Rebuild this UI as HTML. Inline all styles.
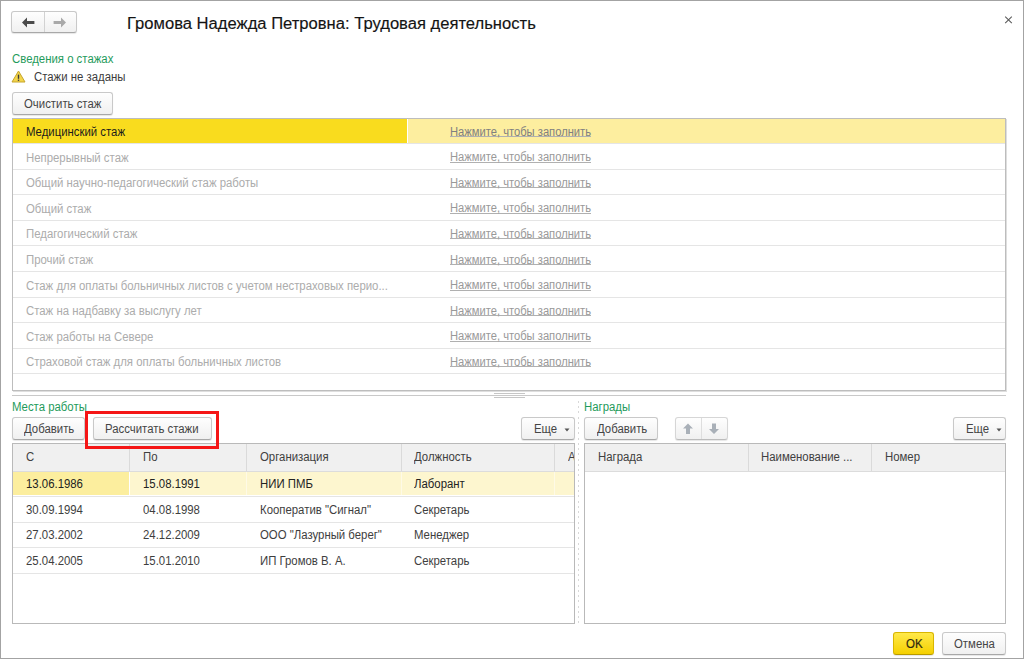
<!DOCTYPE html>
<html><head><meta charset="utf-8"><style>
*{margin:0;padding:0;box-sizing:border-box}
html,body{width:1024px;height:659px;overflow:hidden;background:#fff}
body{font-family:"Liberation Sans",sans-serif;position:relative}
.a{position:absolute}
.t{position:absolute;white-space:nowrap;line-height:14px;transform-origin:0 0}
.btn{position:absolute;border:1px solid #c9c9c9;border-bottom-color:#a8a8a8;border-radius:3px;background:linear-gradient(#fefefe,#f0f0f0);box-shadow:0 1px 1px rgba(0,0,0,0.10)}
.ln{position:absolute;height:1px}
</style></head><body>
<div class="a" style="left:0;top:0;width:1024px;height:659px;border:1px solid #a3a3a3"></div>
<div class="btn" style="left:11px;top:11px;width:66px;height:22px"></div>
<div class="a" style="left:44px;top:12px;width:1px;height:20px;background:#d2d2d2"></div>
<svg class="a" style="left:19px;top:15px" width="18" height="15" viewBox="0 0 18 15"><path d="M3 7.5 L8 2.5 L8 6 L15.4 6 L15.4 9 L8 9 L8 12.5 Z" fill="#4b4b4b"/></svg>
<svg class="a" style="left:51px;top:15px" width="18" height="15" viewBox="0 0 18 15"><path d="M15 7.5 L10 2.5 L10 6 L2.6 6 L2.6 9 L10 9 L10 12.5 Z" fill="#a9a9a9"/></svg>
<div class="t" style="left:127px;top:15.5px;color:#141414;font-size:17.3px;transform:scaleX(0.96);-webkit-text-stroke:0.15px #141414">Громова Надежда Петровна: Трудовая деятельность</div>
<svg class="a" style="left:1003px;top:14px" width="11" height="11" viewBox="0 0 11 11"><path d="M2.2 2.6 L8.8 9.2 M8.8 2.6 L2.2 9.2" stroke="#5a5a5a" stroke-width="1.05"/></svg>
<div class="t" style="left:12px;top:52px;color:#1f9b5c;font-size:12.5px;transform:scaleX(0.91);">Сведения о стажах</div>
<svg class="a" style="left:11px;top:70px" width="15" height="13" viewBox="0 0 15 13"><path d="M7.5 1 L14 12 L1 12 Z" fill="#f3d54a" stroke="#c6a52c" stroke-width="1" stroke-linejoin="round"/><rect x="6.8" y="4.6" width="1.4" height="4.2" fill="#3a3a3a"/><rect x="6.8" y="9.6" width="1.4" height="1.3" fill="#3a3a3a"/></svg>
<div class="t" style="left:34px;top:70px;color:#3c3c3c;font-size:12.5px;transform:scaleX(0.91);">Стажи не заданы</div>
<div class="btn" style="left:12px;top:92px;width:101px;height:23px"></div>
<div class="t" style="left:24px;top:96.5px;color:#454545;font-size:12.5px;transform:scaleX(0.91);">Очистить стаж</div>
<div class="a" style="left:12px;top:118px;width:994px;height:273px;border:1px solid #bdbdbd;box-shadow:1px 1px 0 #dedede"></div>
<div class="a" style="left:13px;top:119px;width:394px;height:24px;background:#f9dc1e"></div>
<div class="a" style="left:408px;top:119px;width:597px;height:24px;background:#fdee9f"></div>
<div class="ln" style="left:13px;top:143px;width:992px;background:#e5e5e5"></div>
<div class="ln" style="left:13px;top:169px;width:992px;background:#e5e5e5"></div>
<div class="ln" style="left:13px;top:194px;width:992px;background:#e5e5e5"></div>
<div class="ln" style="left:13px;top:220px;width:992px;background:#e5e5e5"></div>
<div class="ln" style="left:13px;top:245px;width:992px;background:#e5e5e5"></div>
<div class="ln" style="left:13px;top:271px;width:992px;background:#e5e5e5"></div>
<div class="ln" style="left:13px;top:297px;width:992px;background:#e5e5e5"></div>
<div class="ln" style="left:13px;top:322px;width:992px;background:#e5e5e5"></div>
<div class="ln" style="left:13px;top:348px;width:992px;background:#e5e5e5"></div>
<div class="ln" style="left:13px;top:373px;width:992px;background:#e5e5e5"></div>
<div class="ln" style="left:450px;top:136.0px;width:141px;background:#b0b0b0"></div>
<div class="ln" style="left:450px;top:161.6px;width:141px;background:#b0b0b0"></div>
<div class="ln" style="left:450px;top:187.2px;width:141px;background:#b0b0b0"></div>
<div class="ln" style="left:450px;top:212.8px;width:141px;background:#b0b0b0"></div>
<div class="ln" style="left:450px;top:238.4px;width:141px;background:#b0b0b0"></div>
<div class="ln" style="left:450px;top:264.0px;width:141px;background:#b0b0b0"></div>
<div class="ln" style="left:450px;top:289.6px;width:141px;background:#b0b0b0"></div>
<div class="ln" style="left:450px;top:315.2px;width:141px;background:#b0b0b0"></div>
<div class="ln" style="left:450px;top:340.8px;width:141px;background:#b0b0b0"></div>
<div class="ln" style="left:450px;top:366.4px;width:141px;background:#b0b0b0"></div>
<div class="t" style="left:26px;top:125.0px;color:#1c1c1c;font-size:12.5px;transform:scaleX(0.91);">Медицинский стаж</div>
<div class="t" style="left:450px;top:124.5px;color:#808080;font-size:12.5px;transform:scaleX(0.895);">Нажмите, чтобы заполнить</div>
<div class="t" style="left:26px;top:150.6px;color:#acacac;font-size:12.5px;transform:scaleX(0.91);">Непрерывный стаж</div>
<div class="t" style="left:450px;top:150.1px;color:#999999;font-size:12.5px;transform:scaleX(0.895);">Нажмите, чтобы заполнить</div>
<div class="t" style="left:26px;top:176.2px;color:#acacac;font-size:12.5px;transform:scaleX(0.91);">Общий научно-педагогический стаж работы</div>
<div class="t" style="left:450px;top:175.7px;color:#999999;font-size:12.5px;transform:scaleX(0.895);">Нажмите, чтобы заполнить</div>
<div class="t" style="left:26px;top:201.8px;color:#acacac;font-size:12.5px;transform:scaleX(0.91);">Общий стаж</div>
<div class="t" style="left:450px;top:201.3px;color:#999999;font-size:12.5px;transform:scaleX(0.895);">Нажмите, чтобы заполнить</div>
<div class="t" style="left:26px;top:227.4px;color:#acacac;font-size:12.5px;transform:scaleX(0.91);">Педагогический стаж</div>
<div class="t" style="left:450px;top:226.9px;color:#999999;font-size:12.5px;transform:scaleX(0.895);">Нажмите, чтобы заполнить</div>
<div class="t" style="left:26px;top:253.0px;color:#acacac;font-size:12.5px;transform:scaleX(0.91);">Прочий стаж</div>
<div class="t" style="left:450px;top:252.5px;color:#999999;font-size:12.5px;transform:scaleX(0.895);">Нажмите, чтобы заполнить</div>
<div class="t" style="left:26px;top:278.6px;color:#acacac;font-size:12.5px;transform:scaleX(0.91);">Стаж для оплаты больничных листов с учетом нестраховых перио...</div>
<div class="t" style="left:450px;top:278.1px;color:#999999;font-size:12.5px;transform:scaleX(0.895);">Нажмите, чтобы заполнить</div>
<div class="t" style="left:26px;top:304.2px;color:#acacac;font-size:12.5px;transform:scaleX(0.91);">Стаж на надбавку за выслугу лет</div>
<div class="t" style="left:450px;top:303.7px;color:#999999;font-size:12.5px;transform:scaleX(0.895);">Нажмите, чтобы заполнить</div>
<div class="t" style="left:26px;top:329.8px;color:#acacac;font-size:12.5px;transform:scaleX(0.91);">Стаж работы на Севере</div>
<div class="t" style="left:450px;top:329.3px;color:#999999;font-size:12.5px;transform:scaleX(0.895);">Нажмите, чтобы заполнить</div>
<div class="t" style="left:26px;top:355.4px;color:#acacac;font-size:12.5px;transform:scaleX(0.91);">Страховой стаж для оплаты больничных листов</div>
<div class="t" style="left:450px;top:354.9px;color:#999999;font-size:12.5px;transform:scaleX(0.895);">Нажмите, чтобы заполнить</div>
<div class="ln" style="left:12px;top:395px;width:994px;background:#c9c9c9"></div>
<div class="ln" style="left:494px;top:393px;width:31px;background:#c6c6c6"></div>
<div class="ln" style="left:494px;top:397px;width:31px;background:#c6c6c6"></div>
<div class="a" style="left:578px;top:400.8px;width:1px;height:225px;background:repeating-linear-gradient(#d8d8d8 0 2px,transparent 2px 5.25px)"></div>
<div class="t" style="left:12px;top:399.8px;color:#1f9b5c;font-size:12.5px;transform:scaleX(0.91);">Места работы</div>
<div class="btn" style="left:12px;top:417px;width:73px;height:23px"></div>
<div class="t" style="left:24px;top:422px;color:#454545;font-size:12.5px;transform:scaleX(0.91);">Добавить</div>
<div class="btn" style="left:93px;top:417px;width:119px;height:23px"></div>
<div class="t" style="left:105px;top:422px;color:#454545;font-size:12.5px;transform:scaleX(0.91);">Рассчитать стажи</div>
<div class="btn" style="left:521px;top:417px;width:54px;height:23px"></div>
<div class="t" style="left:533.5px;top:422px;color:#454545;font-size:12.5px;transform:scaleX(0.91);">Еще</div>
<svg class="a" style="left:563.5px;top:428px" width="6" height="4" viewBox="0 0 6 4"><path d="M0.5 0.5 L5.5 0.5 L3 3.5 Z" fill="#555"/></svg>
<div class="a" style="left:12px;top:443px;width:563px;height:181px;border:1px solid #b9b9b9"></div>
<div class="a" style="left:13px;top:444px;width:561px;height:27px;background:#f0f0f0"></div>
<div class="ln" style="left:13px;top:471px;width:561px;background:#dcdcdc"></div>
<div class="a" style="left:129px;top:444px;width:1px;height:27px;background:#dadada"></div>
<div class="a" style="left:246px;top:444px;width:1px;height:27px;background:#dadada"></div>
<div class="a" style="left:401px;top:444px;width:1px;height:27px;background:#dadada"></div>
<div class="a" style="left:554px;top:444px;width:1px;height:27px;background:#dadada"></div>
<div class="t" style="left:26px;top:450px;color:#404040;font-size:12.5px;transform:scaleX(0.91);">С</div>
<div class="t" style="left:143px;top:450px;color:#404040;font-size:12.5px;transform:scaleX(0.91);">По</div>
<div class="t" style="left:260px;top:450px;color:#404040;font-size:12.5px;transform:scaleX(0.91);">Организация</div>
<div class="t" style="left:414px;top:450px;color:#404040;font-size:12.5px;transform:scaleX(0.91);">Должность</div>
<div class="a" style="left:568px;top:444px;width:6px;height:27px;overflow:hidden"><div class="t" style="left:0;top:6px;color:#404040;font-size:12.5px;transform:scaleX(.91)">А</div></div>
<div class="a" style="left:13px;top:472px;width:116px;height:23px;background:#fcee9e"></div>
<div class="a" style="left:130px;top:472px;width:444px;height:23px;background:#fdf6cf"></div>
<div class="a" style="left:246px;top:472px;width:1px;height:23px;background:#fefae6"></div>
<div class="a" style="left:401px;top:472px;width:1px;height:23px;background:#fefae6"></div>
<div class="a" style="left:554px;top:472px;width:1px;height:23px;background:#fefae6"></div>
<div class="ln" style="left:13px;top:496px;width:561px;background:#e5e5e5"></div>
<div class="ln" style="left:13px;top:522px;width:561px;background:#e5e5e5"></div>
<div class="ln" style="left:13px;top:547px;width:561px;background:#e5e5e5"></div>
<div class="ln" style="left:13px;top:573px;width:561px;background:#e5e5e5"></div>
<div class="t" style="left:26px;top:477.0px;color:#222222;font-size:12.5px;transform:scaleX(0.91);">13.06.1986</div>
<div class="t" style="left:143px;top:477.0px;color:#222222;font-size:12.5px;transform:scaleX(0.91);">15.08.1991</div>
<div class="t" style="left:260px;top:477.0px;color:#222222;font-size:12.5px;transform:scaleX(0.91);">НИИ ПМБ</div>
<div class="t" style="left:414px;top:477.0px;color:#222222;font-size:12.5px;transform:scaleX(0.91);">Лаборант</div>
<div class="t" style="left:26px;top:502.6px;color:#3e3e3e;font-size:12.5px;transform:scaleX(0.91);">30.09.1994</div>
<div class="t" style="left:143px;top:502.6px;color:#3e3e3e;font-size:12.5px;transform:scaleX(0.91);">04.08.1998</div>
<div class="t" style="left:260px;top:502.6px;color:#3e3e3e;font-size:12.5px;transform:scaleX(0.91);">Кооператив "Сигнал"</div>
<div class="t" style="left:414px;top:502.6px;color:#3e3e3e;font-size:12.5px;transform:scaleX(0.91);">Секретарь</div>
<div class="t" style="left:26px;top:528.2px;color:#3e3e3e;font-size:12.5px;transform:scaleX(0.91);">27.03.2002</div>
<div class="t" style="left:143px;top:528.2px;color:#3e3e3e;font-size:12.5px;transform:scaleX(0.91);">24.12.2009</div>
<div class="t" style="left:260px;top:528.2px;color:#3e3e3e;font-size:12.5px;transform:scaleX(0.91);">ООО "Лазурный берег"</div>
<div class="t" style="left:414px;top:528.2px;color:#3e3e3e;font-size:12.5px;transform:scaleX(0.91);">Менеджер</div>
<div class="t" style="left:26px;top:553.8px;color:#3e3e3e;font-size:12.5px;transform:scaleX(0.91);">25.04.2005</div>
<div class="t" style="left:143px;top:553.8px;color:#3e3e3e;font-size:12.5px;transform:scaleX(0.91);">15.01.2010</div>
<div class="t" style="left:260px;top:553.8px;color:#3e3e3e;font-size:12.5px;transform:scaleX(0.91);">ИП Громов В. А.</div>
<div class="t" style="left:414px;top:553.8px;color:#3e3e3e;font-size:12.5px;transform:scaleX(0.91);">Секретарь</div>
<div class="t" style="left:584px;top:399.8px;color:#1f9b5c;font-size:12.5px;transform:scaleX(0.91);">Награды</div>
<div class="btn" style="left:584px;top:417px;width:74px;height:23px"></div>
<div class="t" style="left:596.5px;top:422px;color:#454545;font-size:12.5px;transform:scaleX(0.91);">Добавить</div>
<div class="btn" style="left:675px;top:417px;width:53px;height:23px;border-color:#d6d6d6;border-bottom-color:#bcbcbc"></div>
<div class="a" style="left:701px;top:418px;width:1px;height:21px;background:#dedede"></div>
<svg class="a" style="left:682px;top:422px" width="12" height="12" viewBox="0 0 12 12"><path d="M6 1.5 L11 6.5 L8 6.5 L8 12 L4 12 L4 6.5 L1 6.5 Z" fill="#a9b0b8"/></svg>
<svg class="a" style="left:708px;top:422px" width="12" height="12" viewBox="0 0 12 12"><path d="M6 12 L11 7 L8 7 L8 1.5 L4 1.5 L4 7 L1 7 Z" fill="#a9b0b8"/></svg>
<div class="btn" style="left:953px;top:417px;width:53px;height:23px"></div>
<div class="t" style="left:965.5px;top:422px;color:#454545;font-size:12.5px;transform:scaleX(0.91);">Еще</div>
<svg class="a" style="left:995.5px;top:428px" width="6" height="4" viewBox="0 0 6 4"><path d="M0.5 0.5 L5.5 0.5 L3 3.5 Z" fill="#555"/></svg>
<div class="a" style="left:584px;top:443px;width:422px;height:181px;border:1px solid #b9b9b9"></div>
<div class="a" style="left:585px;top:444px;width:420px;height:27px;background:#f0f0f0"></div>
<div class="ln" style="left:585px;top:471px;width:420px;background:#dcdcdc"></div>
<div class="a" style="left:748px;top:444px;width:1px;height:27px;background:#dadada"></div>
<div class="a" style="left:871px;top:444px;width:1px;height:27px;background:#dadada"></div>
<div class="t" style="left:598px;top:450px;color:#404040;font-size:12.5px;transform:scaleX(0.91);">Награда</div>
<div class="t" style="left:761px;top:450px;color:#404040;font-size:12.5px;transform:scaleX(0.91);">Наименование ...</div>
<div class="t" style="left:885px;top:450px;color:#404040;font-size:12.5px;transform:scaleX(0.91);">Номер</div>
<div class="a" style="left:85px;top:411px;width:134px;height:38px;border:3px solid #f51616"></div>
<div class="btn" style="left:893px;top:632px;width:41px;height:23px;background:linear-gradient(#ffe94a,#f5d000);border-color:#d9b600;border-bottom-color:#b89a00"></div>
<div class="t" style="left:905.5px;top:637px;color:#2e2a10;font-size:12.8px;transform:scaleX(0.9);-webkit-text-stroke:0.2px #2e2a10">OK</div>
<div class="btn" style="left:942px;top:632px;width:64px;height:23px"></div>
<div class="t" style="left:954px;top:637px;color:#454545;font-size:12.5px;transform:scaleX(0.91);">Отмена</div>
</body></html>
